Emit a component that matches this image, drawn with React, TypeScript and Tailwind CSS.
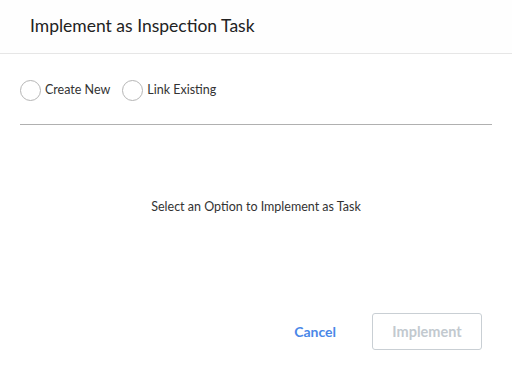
export default function App() {
  return (
    <div className="w-[512px] h-[384px] bg-white flex flex-col text-[#333]" style={{ fontFamily: "Lato, 'Noto Sans', sans-serif" }}>
      <div className="h-[54px] bg-[#fefefe] border-b border-[#e6e6e6] flex items-center px-[30px]">
        <span className="text-[17.5px] text-[#222]">Implement as Inspection Task</span>
      </div>
      <div className="px-[20px] pt-[25px]">
        <div className="flex items-center gap-[12px] h-[22px]">
          <label className="flex items-center gap-[4px]">
            <span className="w-[21px] h-[21px] rounded-full border border-[#b5b5b5] bg-white" />
            <span className="text-[12.5px]">Create New</span>
          </label>
          <label className="flex items-center gap-[4px]">
            <span className="w-[21px] h-[21px] rounded-full border border-[#b5b5b5] bg-white" />
            <span className="text-[12.5px]">Link Existing</span>
          </label>
        </div>
        <div className="mt-[23px] border-t border-[#b0b0b0]" />
      </div>
      <div className="flex-1 flex items-center justify-center pb-[24px]">
        <span className="text-[12.5px]">Select an Option to Implement as Task</span>
      </div>
      <div className="flex items-center justify-end gap-[36px] px-[30px] pb-[34px]">
        <span className="text-[14px] font-bold text-[#4a87e8]">Cancel</span>
        <button className="w-[110px] h-[37px] rounded-[3px] border border-[#c9cfd4] text-[14.5px] font-bold text-[#c2c9cf] bg-white">Implement</button>
      </div>
    </div>
  );
}
